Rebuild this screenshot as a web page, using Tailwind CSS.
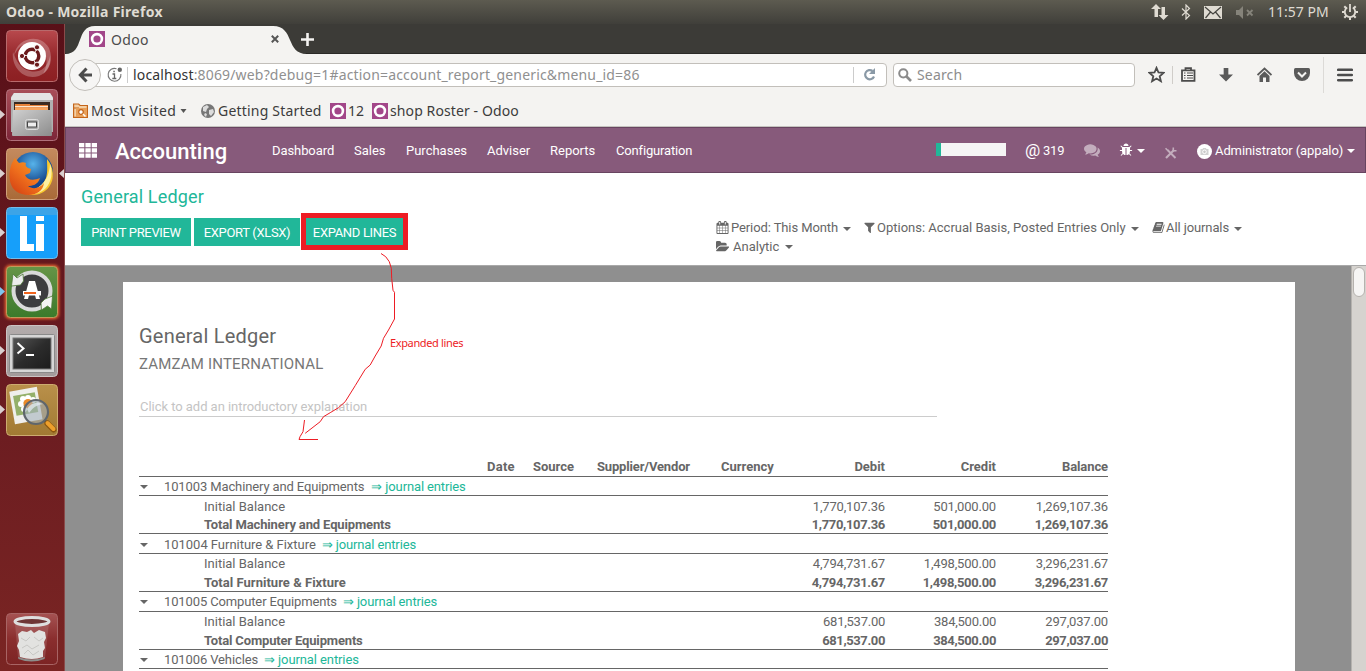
<!DOCTYPE html>
<html lang="en">
<head>
<meta charset="utf-8">
<title>Odoo</title>
<script src="https://cdn.jsdelivr.net/npm/@tailwindcss/browser@4"></script>
</head>
<body class="relative flex h-[671px] w-[1366px] flex-col overflow-hidden bg-white font-['Noto_Sans',sans-serif] text-[#3c3c3c]">
<svg class="hidden">
  <symbol id="caret" viewBox="0 0 8 4"><path d="M0 0h8L4 4z" fill="currentColor"/></symbol>
  <symbol id="odoo" viewBox="0 0 16 16"><path fill="#a24689" d="M0 0h16v16H0z"/><circle cx="8" cy="8" r="4.900" fill="none" stroke="#fff" stroke-width="2.600"/></symbol>
</svg>

<!-- System panel -->
<header class="flex h-6 shrink-0 items-center bg-linear-to-b from-[#5d5b50] to-[#403f3a] text-[#dfdbd2]">
  <div class="w-[1151px] pl-[6px] text-[14px] leading-6 font-bold whitespace-nowrap tracking-[0.28px]">Odoo - Mozilla Firefox</div>
  <svg class="h-4 w-[18px]" viewBox="0 0 18 16" fill="#dfdbd2"><path d="M5 0l5 5H7v8H3.500V5H0zM12.500 16l-5-5h3V3H14v8h3.500z"/></svg>
  <svg class="ml-[12px] h-4 w-[10px]" viewBox="0 0 10 16" fill="none" stroke="#dfdbd2" stroke-width="1.200"><path d="M1 4.500l7.500 7L5 15V1l3.500 3.500L1 11.500"/></svg>
  <svg class="ml-[13px] h-[13px] w-[18px]" viewBox="0 0 18 13"><path fill="#dfdbd2" d="M0 0h18v13H0z"/><path d="M1 1l8 7 8-7M1.500 12l5-6M16.500 12l-5-6" fill="none" stroke="#45443f" stroke-width="1.200"/></svg>
  <svg class="ml-[14px] h-[13px] w-[18px]" viewBox="0 0 18 13" fill="#85837a"><path d="M0 4h3l4-4v13L3 9H0z"/><path d="M11 4l5.500 5.500M16.500 4L11 9.500" stroke="#85837a" stroke-width="1.800"/></svg>
  <div class="ml-[14px] w-[74px] text-[14px] leading-6 whitespace-nowrap">11:57 PM</div>
  <svg class="h-4 w-4" viewBox="0 0 16 16" fill="none" stroke="#dfdbd2"><path d="M5.200 3.600a5.200 5.200 0 1 0 5.600 0" stroke-width="1.800"/><path d="M8 0v8" stroke-width="1.800"/><path d="M0 8h2.500M13.500 8H16M2.300 2.300l2 2M13.700 2.300l-2 2M2.300 13.700l2-2M13.700 13.700l-2-2M8 13.500V16" stroke-width="2"/></svg>
</header>

<div class="flex min-h-0 flex-1">
  <!-- Launcher -->
  <aside class="relative flex w-[65px] shrink-0 flex-col gap-[7px] border-r border-[#8a4a4a] bg-linear-to-b from-[#591018] via-[#681a20] to-[#7a2523] pt-[6px] pl-[6px]">
    <svg class="size-[52px]" viewBox="0 0 52 52">
      <defs><linearGradient id="g1" x2="0" y2="1"><stop stop-color="#b8494d"/><stop offset=".5" stop-color="#96282c"/><stop offset="1" stop-color="#8c1f22"/></linearGradient></defs>
      <rect x=".5" y=".5" width="51" height="51" rx="4" fill="url(#g1)" stroke="#b86a6c"/>
      <path d="M8 26C10 8 34 2 43 18c5 12 0 22-6 26 8-14 2-28-11-31-9-1-15 5-18 13z" fill="#fff" opacity=".25"/>
      <path d="M7 22c-2 14 10 29 26 24 10-4 12-14 11-20-3 14-12 17-20 15C14 39 10 30 7 22z" fill="#fff" opacity=".25"/>
      <circle cx="26" cy="26" r="14" fill="#fff"/>
      <circle cx="26" cy="26" r="6.800" fill="none" stroke="#6b1a1c" stroke-width="3.400" stroke-dasharray="13.200 1" stroke-dashoffset="6"/>
      <g fill="#6b1a1c" stroke="#fff"><circle cx="16" cy="26" r="2.600"/><circle cx="31" cy="17.300" r="2.600"/><circle cx="31" cy="34.700" r="2.600"/></g>
    </svg>
    <svg class="size-[52px]" viewBox="0 0 52 52">
      <defs><linearGradient id="g2" x2="0" y2="1"><stop stop-color="#a84e58"/><stop offset="1" stop-color="#7c2538"/></linearGradient><linearGradient id="g2b" x2="1" y2="1"><stop stop-color="#d0d0d0"/><stop offset="1" stop-color="#8c8c8c"/></linearGradient></defs>
      <rect x=".5" y=".5" width="51" height="51" rx="4" fill="url(#g2)" stroke="#b0707a"/>
      <path d="M5 8l3-4h36l3 4v35H5z" fill="#b0b0b0"/><path d="M5 9l3-5h36l3 5v2H5z" fill="#e4e4e4"/>
      <path d="M8 13h36v9H8z" fill="#3a2a22"/><path d="M9 15h15v1h18v6H9z" fill="#e8833a"/><path d="M9 17h33v1.200H9z" fill="#fbe6cf"/><path d="M9 19h33v2H9z" fill="#f6a560"/>
      <path d="M7 21h38l1 25q0 1-1 1H7q-1 0-1-1z" fill="url(#g2b)"/>
      <rect x="19.500" y="30.500" width="13" height="10" rx="2" fill="#aaa" stroke="#ddd"/><rect x="21.500" y="33" width="9" height="5" fill="#eee" stroke="#444"/>
    </svg>
    <svg class="size-[52px]" viewBox="0 0 52 52">
      <defs><linearGradient id="g3" x2="0" y2="1"><stop stop-color="#c48a5e"/><stop offset="1" stop-color="#a96a38"/></linearGradient><radialGradient id="g3b" cy=".3"><stop stop-color="#57b3ea"/><stop offset="1" stop-color="#14468c"/></radialGradient><linearGradient id="g3c" x1=".8" x2="0" y2="1"><stop stop-color="#f7a022"/><stop offset=".5" stop-color="#ee6d1c"/><stop offset="1" stop-color="#cf3a12"/></linearGradient></defs>
      <rect x=".5" y=".5" width="51" height="51" rx="4" fill="url(#g3)" stroke="#cfa07a"/>
      <circle cx="27" cy="24" r="20" fill="url(#g3b)"/>
      <path d="M41 11c7 8 8 20 2 28-7 9-19 10-27 5 10 0 20-4 24-14 2-7 1-12 1-19z" fill="#f9c92e"/><path d="M44 16c3 8 2 18-5 25-6 5-13 6-19 4 11-3 23-10 24-29z" fill="#fff0a0"/>
      <path d="M6 15l3-5 4 5c3-1 5-1 7 0-1 2 0 4 2 5l3 1-1 4-5 2c2 5 8 6 15 3-2 7-8 8-12 8 5 4 12 2 16-3-1 10-12 14-22 11C3 43 1 27 6 15z" fill="url(#g3c)"/>
    </svg>
    <svg class="size-[52px]" viewBox="0 0 52 52">
      <rect x=".5" y=".5" width="51" height="51" rx="4" fill="#169ffa" stroke="#74bce8"/><path d="M1 3q0-2 2-2h46q2 0 2 2v5H1z" fill="#62a9d4" opacity=".5"/>
      <path fill="#fff" d="M14 9h7v28h7v7H14zM30 9h8v5h-8zM30 17h8v27h-8z"/>
    </svg>
    <svg class="size-[52px] overflow-visible" viewBox="0 0 52 52">
      <defs><filter id="glow" x="-20%" y="-20%" width="140%" height="140%"><feGaussianBlur stdDeviation="1.500"/></filter><linearGradient id="g5" x2="0" y2="1"><stop stop-color="#669447"/><stop offset="1" stop-color="#3b7a2b"/></linearGradient></defs>
      <rect x="-1" y="-1" width="54" height="54" rx="5" fill="#f06a30" filter="url(#glow)"/>
      <rect x=".5" y=".5" width="51" height="51" rx="4" fill="url(#g5)" stroke="#c09a5a"/>
      <circle cx="26" cy="25" r="18.500" fill="#3d3d3f" stroke="#dadada" stroke-width="4"/>
      <path d="M5.500 20L7 8l4 4 6-4 .5 7-3 4z" fill="#ececec" stroke="#4f7a38" stroke-width=".8"/><path d="M46.500 30l-1 13-4-3-6 4-.5-7 4-4z" fill="#f4f4f4" stroke="#4f7a38" stroke-width=".8"/>
      <path d="M23 15h6l5 18h-4l-1-4h-6l-1 4h-4z" fill="#fff"/><path d="M17 25h18v4.500H17z" fill="#fff"/><path d="M18 26h12v2H18z" fill="#f0641e"/>
    </svg>
    <svg class="size-[52px]" viewBox="0 0 52 52">
      <defs><linearGradient id="g6" x2="0" y2="1"><stop stop-color="#b3acac"/><stop offset="1" stop-color="#a39b9b"/></linearGradient><linearGradient id="g6b" x2="1" y2="1"><stop stop-color="#555"/><stop offset=".5" stop-color="#2c2c2c"/><stop offset="1" stop-color="#1c1c1c"/></linearGradient></defs>
      <rect x=".5" y=".5" width="51" height="51" rx="4" fill="url(#g6)" stroke="#cbc4c4"/>
      <rect x="3.500" y="9.500" width="45" height="38" rx="1" fill="#d6d6d6" stroke="#8a8a8a"/><rect x="7" y="13" width="38" height="31" fill="url(#g6b)" stroke="#777"/>
      <path d="M11.500 18l6 5.500-6 5" fill="none" stroke="#fff" stroke-width="2"/><path d="M20 30h8" stroke="#fff" stroke-width="2"/>
    </svg>
    <svg class="size-[52px]" viewBox="0 0 52 52">
      <defs><linearGradient id="g7" x2="0" y2="1"><stop stop-color="#b9904a"/><stop offset="1" stop-color="#a17a33"/></linearGradient></defs>
      <rect x=".5" y=".5" width="51" height="51" rx="4" fill="url(#g7)" stroke="#cdab70"/>
      <g transform="rotate(-10 20 22)"><path d="M6 5h28v33H6z" fill="#efefec"/><path d="M9 10h22v20H9z" fill="#94b06a"/></g>
      <g fill="#fff"><circle cx="22" cy="14" r="3"/><circle cx="17" cy="15" r="3"/><circle cx="15" cy="20" r="3"/><circle cx="27" cy="16" r="3"/><circle cx="18" cy="25" r="3"/></g><circle cx="22" cy="19.500" r="4.500" fill="#eb8a28"/>
      <circle cx="30" cy="28" r="12" fill="#a3b1bd" fill-opacity=".6" stroke="#5f666c" stroke-width="2.200"/><path d="M21 25q6-9 16-5-9 1-14 9z" fill="#dfe7ec" opacity=".8"/>
      <path d="M39 37l3 3" stroke="#555" stroke-width="3"/><path d="M41.500 39.500l6 6" stroke="#8a560f" stroke-width="6" stroke-linecap="round"/><path d="M41.500 39l6 6" stroke="#eea02c" stroke-width="4" stroke-linecap="round"/>
    </svg>
    <svg class="mt-[170px] size-[52px]" viewBox="0 0 52 52">
      <defs><linearGradient id="g8" x2="0" y2="1"><stop stop-color="#a55252"/><stop offset=".5" stop-color="#8a2e2e"/><stop offset="1" stop-color="#7c2424"/></linearGradient></defs>
      <rect x=".5" y=".5" width="51" height="51" rx="4" fill="url(#g8)" stroke="#a86464"/>
      <path d="M9 10h34l-4 35q-13 5-27 0z" fill="#c99a9a" opacity=".25"/>
      <path d="M12 21l4-3 5 1 4-2 3 3 5-3 6 2 1 6-2 4 1 6-2 3v6q-11 4-23 0l-1-7-2-4 2-5z" fill="#e2e2e0"/>
      <path d="M15 25l5 3 4-4M28 24l5 4 4-3M16 35l5-3 5 4 7-4M18 41l4-4 5 5 6-4" stroke="#c8c8c5" fill="none"/>
      <path d="M12 44q14 5 27 0l-.5 2q-13 5-26 0z" fill="#8d8d8b"/>
      <ellipse cx="26" cy="8.500" rx="17" ry="4" fill="#6e3535" stroke="#dedede" stroke-width="3"/>
    </svg>
    <!-- Running-window markers -->
    <svg class="absolute top-0 left-0 h-[430px] w-[65px]" viewBox="0 24 65 430" fill="#d9cfcf"><path d="M0 110l5 4.500-5 4.500zM0 169l5 4.500-5 4.500zM0 228l5 4.500-5 4.500zM0 346l5 4.500-5 4.500zM0 405l5 4.500-5 4.500zM64 169l-5 4.500 5 4.500z"/><path d="M0 287l5 4.500-5 4.500z" fill="#7fc4ee"/></svg>
  </aside>

  <div class="flex min-w-0 flex-1 flex-col">
    <!-- Tab strip -->
    <div class="flex h-[30px] shrink-0 items-end border-b border-[#2a2926] bg-[#3c3b37]">
      <svg class="-mb-px h-[28px] w-[242px] shrink-0" viewBox="0 0 242 28"><path d="M0 28C20 28 10 0 30 0H208c22 0 12 28 34 28z" fill="#f4f3f1"/></svg>
      <div class="-ml-[218px] flex h-[28px] items-center">
        <svg class="size-4"><use href="#odoo"/></svg>
        <span class="ml-[6px] w-[160px] text-[14px] tracking-[0.35px] text-[#4c4c4c]">Odoo</span>
        <svg class="size-[8px]" viewBox="0 0 8 8"><path d="M.8.8l6.400 6.400M7.200.8L.8 7.200" stroke="#555" stroke-width="2"/></svg>
        <svg class="ml-[22px] size-[13px]" viewBox="0 0 13 13"><path d="M6.500 0v13M0 6.500h13" stroke="#f4f3f1" stroke-width="2.600"/></svg>
      </div>
    </div>
    <!-- Navigation toolbar -->
    <div class="flex h-[41px] shrink-0 items-center bg-[#f4f3f1] pl-[4px]">
      <div class="z-10 grid size-[32px] shrink-0 place-items-center rounded-full border border-[#c2bfba] bg-[#f6f5f4]">
        <svg class="h-[16px] w-[15px]" viewBox="0 0 15 16" fill="none" stroke="#4c4c4c" stroke-width="3"><path d="M8.500 1.500L2.300 8l6.200 6.500M2.500 8H14"/></svg>
      </div>
      <div class="-ml-[9px] flex h-[24px] w-[795px] shrink-0 items-center rounded-sm border border-[#c2bfba] bg-white pl-[14px]">
        <svg class="h-[16px] w-[16px] shrink-0" viewBox="0 0 16 16"><path d="M9.500 1.700A6.400 6.400 0 1 0 13.900 7" fill="none" stroke="#777" stroke-width="1.100"/><circle cx="12.800" cy="2.800" r="2.200" fill="#666"/><path d="M5.500 7h2v4.500M5.300 11.500h4M6.300 4.500h1.500" fill="none" stroke="#666" stroke-width="1.300"/></svg>
        <span class="ml-[4px] h-4 w-px shrink-0 bg-[#ccc]"></span>
        <div class="ml-[5px] w-[720px] shrink-0 text-[14px] tracking-[0.165px] whitespace-nowrap text-[#909090]"><span class="text-[#333]">localhost</span>:8069/web?debug=1#action=account_report_generic&amp;menu_id=86</div>
        <span class="h-4 w-px shrink-0 bg-[#ccc]"></span>
        <svg class="ml-[9px] size-[13px] shrink-0" viewBox="0 0 13 13"><path d="M9.500 3A4.600 4.600 0 1 0 11 8.500" fill="none" stroke="#8a99a6" stroke-width="2.200"/><path d="M12 0v6H6z" fill="#8a99a6"/></svg>
      </div>
      <div class="ml-[6px] flex h-[24px] w-[242px] shrink-0 items-center rounded-sm border border-[#c2bfba] bg-white pl-[4px]">
        <svg class="size-[14px]" viewBox="0 0 14 14" fill="none" stroke="#8b8b8b"><circle cx="5.300" cy="5.300" r="4.100" stroke-width="2"/><path d="M8.500 8.500l4.500 4.500" stroke-width="2.600"/></svg>
        <span class="ml-[5px] text-[14px] tracking-[0.15px] text-[#8d8d8d]">Search</span>
      </div>
      <svg class="ml-[13px] size-[17px] shrink-0" viewBox="0 0 17 17"><path d="M8.500 1.800l2 4.700 5 .4-3.800 3.300 1.200 5-4.400-2.700-4.400 2.700 1.200-5L1.500 6.900l5-.4z" fill="none" stroke="#4c4c4c" stroke-width="1.800"/></svg>
      <span class="ml-[7px] h-[18px] w-px shrink-0 bg-[#d0cdc9]"></span>
      <svg class="ml-[8px] size-[15px] shrink-0" viewBox="0 0 15 15"><path d="M1 3.300h12.500v10.500H1zM4.500 3V1.200h5.500V3" fill="none" stroke="#4c4c4c" stroke-width="1.800"/><path d="M3 6h1.500M6 6h6M3 8.500h1.500M6 8.500h6M3 11h1.500M6 11h6" stroke="#4c4c4c" stroke-width="1.100"/></svg>
      <svg class="ml-[23px] size-[14px] shrink-0" viewBox="0 0 15 15"><path d="M5 0h5v7h5l-7.500 7.500L0 7h5z" fill="#5a5a5a"/></svg>
      <svg class="ml-[24px] size-[15px] shrink-0" viewBox="0 0 15 15"><path d="M.5 8l7-6.500 7 6.500" fill="none" stroke="#5a5a5a" stroke-width="1.800"/><path d="M2.500 9l5-4.700 5 4.700v6H9v-4.500H6V15H2.500z" fill="#5a5a5a"/></svg>
      <svg class="ml-[22px] h-[15px] w-[16px] shrink-0" viewBox="0 0 16 15"><path d="M1.500 1h13q1.500 0 1.500 1.500V6a8 8 0 0 1-16 0V2.500Q0 1 1.500 1z" fill="#5a5a5a"/><path d="M4 5.500l4 4 4-4" fill="none" stroke="#f4f3f1" stroke-width="2"/></svg>
      <span class="ml-[13px] h-[36px] w-px shrink-0 bg-[#dcdad7]"></span>
      <svg class="ml-[13px] h-[14px] w-[16px] shrink-0" viewBox="0 0 16 14"><path d="M1.200 1.800h13.600M1.200 7h13.600M1.200 12.200h13.600" stroke="#4c4c4c" stroke-width="2.600" stroke-linecap="round"/></svg>
    </div>
    <!-- Bookmarks -->
    <div class="flex h-[32px] shrink-0 items-center border-b border-[#c5c3bf] bg-[#f4f3f1] pl-[8px] text-[14px] whitespace-nowrap text-[#3c3c3c]">
      <svg class="h-[15px] w-[15px]" viewBox="0 0 15 15"><path d="M.6 1h5l1.500 1.500h7.300V14.400H.6z" fill="#f3cfa4" stroke="#c4651a" stroke-width="1.200"/><path d="M1 5h5" stroke="#c4651a"/><path d="M3 5h11v9H3z" fill="#e8a05a"/><circle cx="8" cy="9" r="2.300" fill="#fff" stroke="#c4651a" stroke-width="1.200"/><path d="M10 11l2.500 2.500" stroke="#fff" stroke-width="1.500"/></svg>
      <span class="ml-[3px] w-[89px] tracking-[0.4px]">Most Visited</span>
      <svg class="h-[4px] w-[7px]" viewBox="0 0 7 4"><path d="M.5 0h6l-3 4z" fill="#555"/></svg>
      <svg class="ml-[14px] size-[14px]" viewBox="0 0 14 14"><circle cx="7" cy="7" r="7" fill="#777"/><path d="M2 3l4-2 2 2-2 2-1 3-3-1zM8 6l4-1 1 3-3 4-2-2zM4 9l2 1-1 3-2-2z" fill="#dcdcdc"/></svg>
      <span class="ml-[3px] w-[112px] tracking-[0.2px]">Getting Started</span>
      <svg class="size-4"><use href="#odoo"/></svg>
      <span class="ml-[2px] w-[24px]">12</span>
      <svg class="size-4"><use href="#odoo"/></svg>
      <span class="ml-[2px] tracking-[0.1px]">shop Roster - Odoo</span>
    </div>

    <!-- Odoo -->
    <div class="flex min-h-0 flex-1 flex-col font-[Roboto,sans-serif] text-[13px] text-[#666]">
      <nav class="flex h-[46px] shrink-0 items-center border border-[#684460] bg-[#875a7b] pt-[2px] pl-[13px] whitespace-nowrap text-white">
        <svg class="-mt-[2px] h-[15px] w-[18px]" viewBox="0 0 18 15" fill="#fff"><path d="M0 0h5.300v4.200H0zM6.400 0h5.300v4.200H6.400zM12.700 0H18v4.200h-5.300zM0 5.300h5.300v4.200H0zM6.400 5.300h5.300v4.200H6.400zM12.700 5.300H18v4.200h-5.300zM0 10.600h5.300v4.200H0zM6.400 10.600h5.300v4.200H6.400zM12.700 10.600H18v4.200h-5.300z"/></svg>
        <span class="mt-[2px] ml-[18px] w-[157px] text-[22px] leading-[28px] font-medium">Accounting</span>
        <span class="w-[82px] tracking-[-0.08px]">Dashboard</span>
        <span class="w-[52px]">Sales</span>
        <span class="w-[81px]">Purchases</span>
        <span class="w-[63px]">Adviser</span>
        <span class="w-[66px]">Reports</span>
        <span class="w-[320px] tracking-[-0.16px]">Configuration</span>
        <span class="-mt-[3px] h-[13px] w-[70px] border-l-[5px] border-[#21b799] bg-[#f5f5f5]"></span>
        <span class="-mt-[3px] ml-[19px] w-[18px] text-[17px] leading-5">@</span>
        <span class="w-[41px] tracking-[-0.2px]">319</span>
        <svg class="-mt-[2px] size-[16px]" viewBox="0 0 1792 1792" fill="#c3adbd"><path d="M1408 768q0 139-94 257t-256.500 186.500-353.500 68.500q-86 0-176-16-124 88-278 128-36 9-86 16h-3q-11 0-20.500-8t-11.500-21q-1-3-1-6.500t.5-6.500 2-6l2.500-5 3.500-5.500 4-5 4.500-5 4-4.500q5-6 23-25t26-29.500 22.500-29 25-38.500 20.500-44q-124-72-195-177t-71-224q0-139 94-257t256.500-186.500 353.500-68.500 353.500 68.500 256.500 186.500 94 257zm384 256q0 120-71 224.500t-195 176.500q10 24 20.500 44t25 38.500 22.500 29 26 29.500 23 25q1 1 4 4.500t4.500 5 4 5 3.500 5.500l2.500 5 2 6 .5 6.500-1 6.500q-3 14-13 22t-22 7q-50-7-86-16-154-40-278-128-90 16-176 16-271 0-472-132 58 4 88 4 161 0 309-45t264-129q125-92 192-212t67-254q0-77-23-152 129 71 204 178t75 230z"/></svg>
        <svg class="-mt-[2px] ml-[19px] size-[14px]" viewBox="0 0 1792 1792" fill="#fff"><path d="M1696 960q0 26-19 45t-45 19h-224q0 171-67 290l208 209q19 19 19 45t-19 45q-18 19-45 19t-45-19l-198-197q-5 5-15 13t-42 28.500-65 36.500-82 29-97 13v-896h-128v896q-51 0-101.500-13.500t-87-33-66-39-43.500-32.500l-15-14-183 207q-20 21-48 21-24 0-43-16-19-18-20.500-44.500t15.500-46.500l202-227q-58-114-58-274h-224q-26 0-45-19t-19-45 19-45 45-19h224v-294l-173-173q-19-19-19-45t19-45 45-19 45 19l173 173h844l173-173q19-19 45-19t45 19 19 45-19 45l-173 173v294h224q26 0 45 19t19 45zm-480-576h-640q0-133 93.500-226.500t226.500-93.500 226.500 93.500 93.500 226.500z"/></svg>
        <svg class="ml-[4px] h-[4px] w-[8px]"><use href="#caret"/></svg>
        <svg class="mt-[3px] ml-[20px] size-[12px]" viewBox="0 0 12 12" fill="none" stroke="#c3adbd"><path d="M1 11l8-8" stroke-width="2.200"/><path d="M2.500 3L10.500 11" stroke-width="2"/><path d="M.5 1.200l2.300 2.300M8.300.5v3.200h3.200" stroke-width="1.600"/></svg>
        <svg class="ml-[20px] size-[15px]" viewBox="0 0 15 15"><circle cx="7.500" cy="7.500" r="7.500" fill="#fff"/><path d="M3.500 5h2l.6-1h2.800l.6 1h2v6h-8z" fill="#d2d2d2"/><circle cx="7.500" cy="7.800" r="1.800" fill="#c9c9c9" stroke="#fff"/></svg>
        <span class="ml-[3px] w-[132px] tracking-[-0.1px]">Administrator (appalo)</span>
        <svg class="h-[4px] w-[8px]"><use href="#caret"/></svg>
      </nav>

      <!-- Control panel -->
      <section class="flex h-[92px] shrink-0 pl-[16px] whitespace-nowrap">
        <div class="w-[635px] pt-[12px]">
          <h1 class="text-[18px] leading-6 tracking-[0.15px] text-[#21b799]">General Ledger</h1>
          <div class="mt-[9px] flex h-[28px] gap-[3px] text-center leading-[29px] tracking-[-0.33px] text-white">
            <span class="w-[110px] bg-[#21b799]">PRINT PREVIEW</span>
            <span class="w-[106px] bg-[#21b799]">EXPORT (XLSX)</span>
            <span class="-mt-[5px] ml-[-2px] h-[37px] w-[107px] border-[5px] border-[#ed1c24] bg-[#21b799]">EXPAND LINES</span>
          </div>
        </div>
        <div class="pt-[45px] leading-[19px]">
          <div class="flex items-center">
            <svg class="size-[13px]" viewBox="0 0 1792 1792" fill="#666"><path d="M192 1664h288v-288h-288v288zm352 0h320v-288h-320v288zm-352-352h288v-320h-288v320zm352 0h320v-320h-320v320zm-352-384h288v-288h-288v288zm736 736h320v-288h-320v288zm-384-736h320v-288h-320v288zm768 736h288v-288h-288v288zm-384-352h320v-320h-320v320zm-352-864v-288q0-13-9.500-22.500t-22.500-9.500h-64q-13 0-22.500 9.500t-9.500 22.500v288q0 13 9.500 22.500t22.500 9.500h64q13 0 22.500-9.500t9.500-22.500zm736 864h288v-320h-288v320zm-384-384h320v-288h-320v288zm384 0h288v-288h-288v288zm32-480v-288q0-13-9.500-22.500t-22.500-9.500h-64q-13 0-22.500 9.500t-9.500 22.500v288q0 13 9.500 22.500t22.500 9.500h64q13 0 22.500-9.500t9.500-22.500zm384-64v1280q0 52-38 90t-90 38h-1408q-52 0-90-38t-38-90v-1280q0-52 38-90t90-38h128v-96q0-66 47-113t113-47h64q66 0 113 47t47 113v96h384v-96q0-66 47-113t113-47h64q66 0 113 47t47 113v96h128q52 0 90 38t38 90z"/></svg>
            <span class="ml-[2px] w-[112px] tracking-[-0.1px]">Period: This Month</span>
            <svg class="mt-[2px] h-[4px] w-[8px]"><use href="#caret"/></svg>
            <svg class="ml-[12px] size-[13px]" viewBox="0 0 1792 1792" fill="#666"><path d="M1595 295q17 41-14 70l-493 493v742q0 42-39 59-13 5-25 5-27 0-45-19l-256-256q-19-19-19-45v-486l-493-493q-31-29-14-70 17-39 59-39h1280q42 0 59 39z"/></svg>
            <span class="ml-px w-[254px]">Options: Accrual Basis, Posted Entries Only</span>
            <svg class="mt-[2px] h-[4px] w-[8px]"><use href="#caret"/></svg>
            <svg class="ml-[13px] size-[13px]" viewBox="0 0 1792 1792" fill="#666"><path d="M1703 478q40 57 18 129l-275 906q-19 64-76.500 107.500t-122.500 43.500h-923q-77 0-148.500-53.500t-99.500-131.500q-24-67-2-127 0-4 3-27t4-37q1-8-3-21.500t-3-19.500q2-11 8-21t16.500-23.500 16.500-23.500q23-38 45-91.500t30-91.500q3-10 .5-30t-.5-28q3-11 17-28t17-23q21-36 42-92t25-90q1-9-2.500-32t.5-28q4-13 22-30.500t22-22.500q19-26 42.500-84.500t27.500-96.500q1-8-3-25.500t-2-26.500q2-8 9-18t18-23 17-21q8-12 16.500-30.500t15-35 16-36 19.500-32 26.500-23.500 36-11.500 47.500 5.500l-1 3q38-9 51-9h761q74 0 114 56t18 130l-274 906q-36 119-71.500 153.500t-128.500 34.500h-869q-27 0-38 15-11 16-1 43 24 70 144 70h923q29 0 56-15.500t35-41.500l300-987q7-22 5-57 38 15 59 43zm-1064 2q-4 13 2 22.500t20 9.500h608q13 0 25.500-9.500t16.500-22.500l21-64q4-13-2-22.500t-20-9.500h-608q-13 0-25.500 9.500t-16.500 22.500zm-83 256q-4 13 2 22.500t20 9.500h608q13 0 25.500-9.500t16.500-22.500l21-64q4-13-2-22.500t-20-9.500h-608q-13 0-25.500 9.500t-16.500 22.500z"/></svg>
            <span class="ml-px w-[68px] tracking-[-0.1px]">All journals</span>
            <svg class="mt-[2px] h-[4px] w-[8px]"><use href="#caret"/></svg>
          </div>
          <div class="flex items-center">
            <svg class="size-[13px]" viewBox="0 0 1792 1792" fill="#666"><path d="M1815 952q0 31-31 66l-336 396q-43 51-120.500 86.500t-143.500 35.500h-1088q-34 0-60.500-13t-26.500-43q0-31 31-66l336-396q43-51 120.500-86.500t143.500-35.500h1088q34 0 60.500 13t26.500 43zm-343-344v160h-832q-94 0-197 47.500t-164 119.500l-337 396-5 6q0-4-.5-12.500t-.5-12.500v-960q0-92 66-158t158-66h320q92 0 158 66t66 158v32h544q92 0 158 66t66 158z"/></svg>
            <span class="ml-[4px] w-[52px]">Analytic</span>
            <svg class="h-[4px] w-[8px]"><use href="#caret"/></svg>
          </div>
        </div>
      </section>

      <!-- Report -->
      <main class="flex min-h-0 flex-1 border-t border-[#a9a9a9] bg-[#8f8f8f]">
        <div class="mt-[16px] ml-[58px] w-[1172px] shrink-0 bg-white pt-[40px] pl-[16px]">
          <h2 class="text-[20px] leading-[28px] tracking-[0.22px]">General Ledger</h2>
          <h3 class="mt-px text-[15px] leading-[26px] tracking-[0.19px] text-[#777]">ZAMZAM INTERNATIONAL</h3>
          <div class="mt-[20px] h-[20px] w-[798px] border-b border-[#ccc] pl-px leading-[19px] tracking-[-0.04px] text-[#c4c4c4]">Click to add an introductory explanation</div>
          <div class="mt-[39px] w-[969px] whitespace-nowrap">
            <div class="flex h-[21px] border-b border-[#666] pl-[348px] leading-[21px] font-bold">
              <span class="w-[46px] tracking-[0.25px]">Date</span><span class="w-[64px]">Source</span><span class="w-[124px] tracking-[-0.16px]">Supplier/Vendor</span><span class="w-[53px]">Currency</span>
              <span class="w-[111px] text-right">Debit</span><span class="w-[111px] text-right">Credit</span><span class="w-[112px] text-right tracking-[-0.1px]">Balance</span>
            </div>

            <div class="flex h-[19px] items-center border-b border-[#666] pt-[2px] leading-[18px]"><svg class="ml-px h-[4px] w-[8px]"><use href="#caret"/></svg><span class="ml-[16px] tracking-[-0.12px]">101003 Machinery and Equipments</span><span class="ml-[7px] tracking-[-0.13px] text-[#21b799]">⇒ journal entries</span></div>
            <div class="grid h-[38px] grid-cols-[1fr_111px_112px] grid-rows-[20px_17px] border-b border-[#666] pl-[65px] text-right leading-[22px] tracking-[-0.18px]">
              <div class="flex justify-between"><span class="tracking-normal">Initial Balance</span><span>1,770,107.36</span></div><span>501,000.00</span><span>1,269,107.36</span>
              <div class="flex justify-between leading-[17px] font-bold"><span class="tracking-[-0.14px]">Total Machinery and Equipments</span><span class="tracking-[-0.33px]">1,770,107.36</span></div><b class="leading-[17px] tracking-[-0.33px]">501,000.00</b><b class="leading-[17px] tracking-[-0.33px]">1,269,107.36</b>
            </div>

            <div class="flex h-[20px] items-center border-b border-[#666] pt-[2px] leading-[19px]"><svg class="ml-px h-[4px] w-[8px]"><use href="#caret"/></svg><span class="ml-[16px] tracking-[-0.03px]">101004 Furniture &amp; Fixture</span><span class="ml-[6px] tracking-[-0.13px] text-[#21b799]">⇒ journal entries</span></div>
            <div class="grid h-[38px] grid-cols-[1fr_111px_112px] grid-rows-[19px_18px] border-b border-[#666] pl-[65px] text-right leading-[19px] tracking-[-0.18px]">
              <div class="flex justify-between"><span class="tracking-normal">Initial Balance</span><span>4,794,731.67</span></div><span>1,498,500.00</span><span>3,296,231.67</span>
              <div class="flex justify-between font-bold"><span class="tracking-[0.03px]">Total Furniture &amp; Fixture</span><span class="tracking-[-0.33px]">4,794,731.67</span></div><b class="tracking-[-0.33px]">1,498,500.00</b><b class="tracking-[-0.33px]">3,296,231.67</b>
            </div>

            <div class="flex h-[20px] items-center border-b border-[#666] leading-[19px]"><svg class="ml-px h-[4px] w-[8px]"><use href="#caret"/></svg><span class="ml-[16px] tracking-[-0.13px]">101005 Computer Equipments</span><span class="ml-[6px] tracking-[-0.13px] text-[#21b799]">⇒ journal entries</span></div>
            <div class="grid h-[38px] grid-cols-[1fr_111px_112px] grid-rows-[19px_18px] border-b border-[#666] pl-[65px] text-right leading-[19px] tracking-[-0.18px]">
              <div class="flex justify-between"><span class="tracking-normal">Initial Balance</span><span class="tracking-[-0.25px]">681,537.00</span></div><span class="tracking-[-0.25px]">384,500.00</span><span>297,037.00</span>
              <div class="flex justify-between font-bold"><span class="tracking-[-0.16px]">Total Computer Equipments</span><span class="tracking-[-0.38px]">681,537.00</span></div><b class="tracking-[-0.38px]">384,500.00</b><b class="tracking-[-0.38px]">297,037.00</b>
            </div>

            <div class="flex h-[19px] items-center border-b border-[#666] pt-[2px] leading-[18px]"><svg class="ml-px h-[4px] w-[8px]"><use href="#caret"/></svg><span class="ml-[16px] tracking-[-0.12px]">101006 Vehicles</span><span class="ml-[6px] tracking-[-0.1px] text-[#21b799]">⇒ journal entries</span></div>
          </div>
        </div>
        <div class="ml-auto w-[15px] shrink-0 border-l border-[#b5b2ae] bg-[#d6d3cf] p-px"><div class="h-[30px] rounded-md border border-[#b5b2ae] bg-[#f6f5f4]"></div></div>
      </main>
    </div>
  </div>
</div>

<!-- Hand-drawn annotation -->
<svg class="absolute top-[250px] left-[290px] h-[195px] w-[120px]" viewBox="290 250 120 195" fill="none" stroke="#ed1c24" stroke-width="1"><path d="M381 253.500l4.700 3.200 3.600 5 2 6.600.4 10 1.300 12 1.500 2V319l-6 11-5 8.300-2.300 7.700-6 10-5 9-5 4.300-10 16.400-10 16-6.700 6-8.300 5-6.700 4-3.300 5-15 11.600M304.500 420l-1.500 11.700-3 5-1 2.800h19"/></svg>
<div class="absolute top-[336px] left-[390px] text-[11px] leading-[14px] tracking-[-0.36px] whitespace-nowrap text-[#ed1c24]">Expanded lines</div>
</body>
</html>
